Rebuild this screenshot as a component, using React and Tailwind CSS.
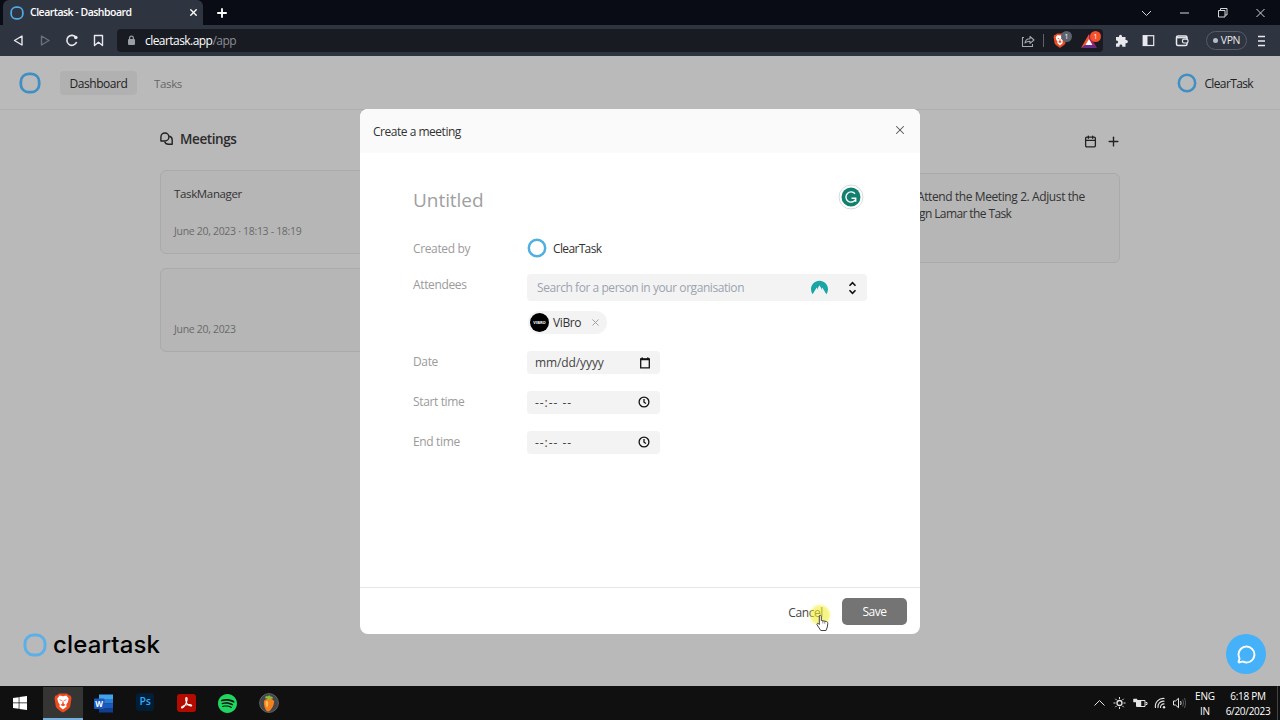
import React, { useState } from "react";
import { Calendar, MessageCircle, Plus, X } from "lucide-react";
import { SiNordvpn, SiSpotify } from "react-icons/si";

const meetings = [
  { id: 1, title: "TaskManager", when: "June 20, 2023 · 18:13 - 18:19" },
  { id: 2, title: "", when: "June 20, 2023" },
];

const Logo = ({ className }) => (
  <svg viewBox="0 0 24 24" className={className} fill="none">
    <rect x="2" y="2" width="20" height="20" rx="8.500" stroke="currentColor" strokeWidth="3" />
  </svg>
);

const Ring = ({ className }) => (
  <svg viewBox="0 0 20 20" className={className} fill="none">
    <circle cx="10" cy="10" r="8.200" stroke="currentColor" strokeWidth="2.500" />
  </svg>
);

const BraveIcon = ({ className }) => (
  <svg viewBox="0 0 18 20" className={className}>
    <path d="M5 .5h8L15 2.300l1.800.4.700 2.500-1.300 8.300c-.5 1.800-5.200 5-7.200 6-2-1-6.700-4.200-7.200-6L.5 5.200l.7-2.500L3 2.300z" fill="#ee4a22" />
    <path d="m9 3.200 3.300-.6 2.400 2.900-.8 3.500-1.700 2.800.5 1.600L9 16.500l-3.700-3.100.5-1.600L4.100 9l-.8-3.500 2.400-2.900z" fill="#fff" />
    <path d="m5 6.200 2.700.8-.2 1.300zM13 6.200l-2.700.8.2 1.300zM9 6.500l.8 4.200L11.500 12 9 13.200 6.500 12l1.700-1.300z" fill="#ee4a22" />
  </svg>
);

const TabBar = () => (
  <div className="flex h-[25px] shrink-0 items-stretch bg-[#090c15] text-white">
    <div className="ml-[3px] flex w-[200px] items-center rounded-t-md bg-[#2f3441] pl-[7px] pr-[4px]">
      <Logo className="h-[14px] w-[14px] text-[#4fa9e2]" />
      <span className="ml-[6px] flex-1 whitespace-nowrap text-[10.5px] font-semibold tracking-[-0.5px]">
        Cleartask - Dashboard
      </span>
      <X size={11} strokeWidth={3} />
    </div>
    <div className="flex w-[37px] items-center justify-center">
      <Plus size={14} strokeWidth={3.2} />
    </div>
    <div className="ml-auto flex items-center pr-[8px]">
      <svg width="134" height="14" viewBox="0 0 134 14" fill="none" stroke="#d5d6da">
        <path d="M4 5l4.500 4.500L13 5" />
        <path d="M42 7h9" />
        <path d="M80.500 4.500h6.500v6.500h-6.500zM82.500 4.500v-2h6.500v6.500h-2" />
        <path d="M118.500 3l8 8M126.500 3l-8 8" />
      </svg>
    </div>
  </div>
);

const Toolbar = () => (
  <div className="flex h-[31px] shrink-0 items-center bg-[#2f3441] text-[#e8e9ec]">
    <svg width="117" height="30" viewBox="0 0 117 30" fill="none" stroke="#e8e9ec" strokeWidth="1.400" strokeLinejoin="round">
      <path d="M22 10v9L14.500 14.500z" />
      <path d="M41.500 10v9L49 14.500z" stroke="#6b707c" />
      <path d="M76 11.500a5 5 0 1 0 .6 4.500" strokeWidth="1.600" />
      <circle cx="75.800" cy="11.500" r="1.800" fill="#e8e9ec" stroke="none" />
      <path d="M94.500 9.500h8v10l-4-3.300-4 3.300z" />
    </svg>
    <div className="flex h-[23px] w-[986px] items-center rounded bg-[#191b22] pl-[10px]">
      <svg width="9" height="11" viewBox="0 0 9 11" fill="none">
        <rect x="1" y="4" width="7" height="6" rx="1" fill="#9a9da4" />
        <path d="M2.600 4.500V3a1.900 1.900 0 0 1 3.800 0v1.500" stroke="#9a9da4" strokeWidth="1.200" />
      </svg>
      <span className="ml-[9px] flex-1 whitespace-nowrap text-[12px] tracking-[-0.55px] text-white">
        cleartask.app<span className="text-[#8a8d95]">/app</span>
      </span>
      <svg width="14" height="14" viewBox="0 0 14 14" fill="none" stroke="#a5a8ae" strokeWidth="1.100">
        <path d="M3 3.500H1.500v9h10V10" />
        <path d="M4 9c.3-2.800 2-4.200 5-4.200V2.500L13 6 9 9.300V7.200C6.800 7.200 5.200 7.700 4 9Z" strokeLinejoin="round" />
      </svg>
      <div className="ml-[8px] mr-[9px] h-[13px] w-px bg-[#5f626a]" />
      <div className="relative h-[16px] w-[20px]">
        <BraveIcon className="h-[15px] w-[14px]" />
        <span className="absolute -top-[2px] left-[8px] h-[11px] w-[11px] rounded-full bg-[#5d626e] text-center text-[7px] leading-[11px] text-white">
          1
        </span>
      </div>
      <div className="relative ml-[8px] h-[16px] w-[22px]">
        <svg width="16" height="14" viewBox="0 0 16 14" className="mt-px">
          <path d="M8 0 0 14l8-5z" fill="#f2552b" />
          <path d="m8 0 8 14-8-5z" fill="#9e1f63" />
          <path d="M0 14h16L8 9z" fill="#662d91" />
          <path d="m8 5 3.500 6h-7z" fill="#fff" />
        </svg>
        <span className="absolute -top-[2px] left-[9px] h-[11px] w-[11px] rounded-full bg-[#f5502a] text-center text-[7px] leading-[11px] text-white">
          1
        </span>
      </div>
    </div>
    <svg width="94" height="30" viewBox="0 0 94 30" fill="none" stroke="#e8e9ec">
      <path
        d="M13 11h3v-.8a1.500 1.500 0 0 1 3 0v.8h3.500v3h.8a1.600 1.600 0 0 1 0 3.200h-.8v3.500h-3.200v-.8a1.400 1.400 0 0 0-2.800 0v.8H13v-3.200h.6a1.500 1.500 0 0 0 0-3H13z"
        fill="#e8e9ec"
        stroke="none"
      />
      <rect x="40.200" y="9.700" width="10.500" height="9.800" strokeWidth="1.200" />
      <path d="M40 9.500h4.500v10H40z" fill="#e8e9ec" stroke="none" />
      <rect x="73.500" y="10" width="10.500" height="9.500" rx="1.500" strokeWidth="1.500" />
      <path d="M74 11.700h10" strokeWidth="1.300" />
      <rect x="79.500" y="13.200" width="5.500" height="3.800" rx="1.500" fill="#2f3441" strokeWidth="1.200" />
    </svg>
    <div className="ml-[9px] flex h-[19px] w-[41px] items-center justify-center gap-[3px] rounded-full border border-[#565b67]">
      <span className="h-[5px] w-[5px] rounded-full bg-[#b9bcc4]" />
      <span className="text-[10.5px] tracking-[-0.4px]">VPN</span>
    </div>
    <svg width="9" height="12" viewBox="0 0 9 12" className="ml-[10px]" stroke="#e8e9ec" strokeWidth="1.300">
      <path d="M1 1.500h7M1 6h7M1 10.500h7" />
    </svg>
  </div>
);

const Header = () => (
  <header className="flex h-[54px] items-center border-b border-[#aeaeae] bg-[#bababa] pl-[19px] pr-[27px]">
    <Logo className="h-[22px] w-[22px] text-[#3f8fc4]" />
    <nav className="ml-[19px] flex items-center pt-px">
      <a className="flex h-[24px] w-[77px] items-center justify-center rounded bg-[#b1b1b1] pt-px text-[12px] font-medium tracking-[-0.45px] text-[#222]">
        Dashboard
      </a>
      <a className="ml-[17px] pt-px text-[11.5px] tracking-[-0.35px] text-[#666]">Tasks</a>
    </nav>
    <Ring className="ml-auto h-[20px] w-[20px] text-[#3f8fc4]" />
    <span className="ml-[7px] pt-[2px] text-[12px] tracking-[-0.62px] text-[#222]">ClearTask</span>
  </header>
);

const Meetings = () => (
  <section className="w-[310px]">
    <h2 className="mt-[19px] flex h-[20px] items-center text-[13.5px] font-semibold tracking-[-0.4px] text-[#2b2b2b]">
      <svg width="13" height="13" viewBox="0 0 13 13" fill="none" stroke="#222" strokeWidth="1.400" strokeLinejoin="round" className="mb-px mr-[7px]">
        <path d="M.9 9V4.900A4 4 0 1 1 4.900 9z" />
        <path d="M9.300 4.300c1.800.4 2.900 1.800 2.900 3.600v4.300H8.300c-1.700 0-3-.9-3.600-2.500" />
      </svg>
      Meetings
    </h2>
    <div className="mt-[21px] flex flex-col gap-[14px]">
      {meetings.map((meeting) => (
        <div
          key={meeting.id}
          className="flex h-[84px] flex-col justify-between rounded-md border border-[#aaa] bg-[#b6b6b6] px-[13px] pb-[14px] pt-[13px]"
        >
          <h3 className="text-[11.5px] leading-[19px] tracking-[-0.35px] text-[#333]">{meeting.title}</h3>
          <p className="text-[10.5px] leading-[16px] tracking-[-0.31px] text-[#6a6a6a]">{meeting.when}</p>
        </div>
      ))}
    </div>
  </section>
);

const Tasks = () => (
  <section className="w-[310px]">
    <div className="-mr-px mt-[21px] flex h-[20px] items-center justify-end gap-[9px] text-[#222]">
      <Calendar size={13} strokeWidth={2.4} />
      <Plus size={15} strokeWidth={2.2} />
    </div>
    <div className="mt-[22px] h-[90px] rounded-md border border-[#aaa] bg-[#b6b6b6] pl-[106px] pt-[14px] text-[12px] leading-[17.500px] tracking-[-0.4px] text-[#333]">
      <p className="whitespace-nowrap">Attend the Meeting 2. Adjust the</p>
      <p className="-mt-px whitespace-nowrap pl-[2px] tracking-[-0.6px]">gn Lamar the Task</p>
    </div>
  </section>
);

const Row = ({ label, className, children }) => (
  <div className={className}>
    <span className="flex h-[22px] w-[114px] shrink-0 items-center text-[12px] tracking-[-0.36px] text-[#9b9b9b]">
      {label}
    </span>
    {children}
  </div>
);

const Clock = () => (
  <svg width="12" height="12" viewBox="0 0 12 12" fill="none" stroke="#111" strokeWidth="1.300" className="mb-px">
    <circle cx="6" cy="6" r="4.900" />
    <path d="M6 3v3.200l2 1.300" />
  </svg>
);

const PickerField = ({ children }) => (
  <div className="flex h-[23px] w-[133px] items-center justify-between rounded bg-[#f3f3f3] pl-[8px] pr-[10px] text-[12px] text-[#444]">
    {children}
  </div>
);

const TimeField = () => (
  <PickerField>
    <span className="pt-px tracking-[0.95px]">--:-- --</span>
    <Clock />
  </PickerField>
);

const MeetingModal = ({ onClose }) => (
  <div className="flex h-[525px] w-[560px] flex-col overflow-hidden rounded-lg bg-white">
    <div className="flex h-[44px] items-center justify-between bg-[#fafafa] px-[13px]">
      <span className="pt-px text-[12px] tracking-[-0.48px] text-[#333]">Create a meeting</span>
      <button onClick={onClose} className="mb-[2px]">
        <X size={14} strokeWidth={1.8} className="text-[#555]" />
      </button>
    </div>

    <div className="flex-1 px-[53px] pt-[27px]">
      <div className="flex h-[40px] items-center justify-between">
        <span className="text-[19px] tracking-[-0.05px] text-[#a0a0a0]">Untitled</span>
        <svg width="26" height="26" viewBox="0 0 26 26" fill="none" className="mb-[6px] mr-[3px]">
          <circle cx="13" cy="13" r="12" stroke="#d5dcdb" />
          <circle cx="13" cy="13" r="9.500" fill="#11806f" />
          <path d="M17 9.800A5.100 5.100 0 1 0 17.300 15.800M13.500 14.200h4.200v3.600" stroke="#fff" strokeWidth="1.400" />
        </svg>
      </div>

      <Row label="Created by" className="mt-[14px] flex h-[28px] items-center pt-px">
        <Ring className="mb-[2px] h-[20px] w-[20px] text-[#4fb0e0]" />
        <span className="ml-[6px] text-[12px] tracking-[-0.65px] text-[#333]">ClearTask</span>
      </Row>

      <Row label="Attendees" className="mt-[12px] flex">
        <div className="flex-1">
          <div className="flex h-[27px] items-center rounded bg-[#f3f3f3] pl-[10px] pr-[10px]">
            <span className="flex-1 text-[12px] tracking-[-0.44px] text-[#9ca3af]">
              Search for a person in your organisation
            </span>
            <SiNordvpn className="mr-[20px] h-[17px] w-[17px] text-[#17a5a5]" />
            <svg width="9" height="14" viewBox="0 0 9 14" fill="none" stroke="#111" strokeWidth="1.600">
              <path d="M1.500 4.700l3-3 3 3M1.500 9.300l3 3 3-3" />
            </svg>
          </div>
          <div className="ml-px mt-[10px] flex h-[23px] w-[79px] items-center rounded-full bg-[#f3f3f3] pl-[2px]">
            <span className="flex h-[19px] w-[19px] items-center justify-center rounded-full bg-black text-[4px] font-bold text-white">
              VIBRO
            </span>
            <span className="ml-[4px] pt-px text-[12px] tracking-[-0.4px] text-[#333]">ViBro</span>
            <X size={11} strokeWidth={2} className="ml-auto mr-[6px] text-[#999]" />
          </div>
        </div>
      </Row>

      <Row label="Date" className="mt-[17px] flex">
        <PickerField>
          <span className="pt-px tracking-[-0.1px]">mm/dd/yyyy</span>
          <svg width="10" height="12" viewBox="0 0 10 12" fill="none" stroke="#111">
            <path d="M.700 2v8.800h8.600V2z" strokeWidth="1.300" />
            <path d="M.5 2.500h9M2.200.5v2M7.800.5v2" strokeWidth="1.600" />
          </svg>
        </PickerField>
      </Row>
      <Row label="Start time" className="mt-[17px] flex">
        <TimeField />
      </Row>
      <Row label="End time" className="mt-[17px] flex">
        <TimeField />
      </Row>
    </div>

    <div className="flex h-[47px] items-center justify-end gap-[19px] border-t border-[#e6e6e6] pr-[13px]">
      <button onClick={onClose} className="pt-[3px] text-[12px] tracking-[-0.4px] text-[#444]">
        Cancel
      </button>
      <button className="h-[27px] w-[65px] rounded-[5px] bg-[#747474] pt-[2px] text-[12px] font-medium tracking-[-0.5px] text-white">
        Save
      </button>
    </div>
  </div>
);

const Cursor = () => (
  <div className="absolute left-[810px] top-[549px]">
    <div className="h-[20px] w-[20px] rounded-full bg-[#f2ee2c]/60 blur-[1px]" />
    <svg width="13" height="18" viewBox="0 0 13 18" className="absolute left-[6px] top-[9px]">
      <path
        d="M3.500 1.500c.9-.6 1.800 0 1.800 1v4l5 1c1 .2 1.600 1 1.500 2L11.300 13l-1.300 3.500H4.800L1 10.800c-.5-1 .6-1.900 1.500-1.200l.8.900V2z"
        fill="#fff"
        stroke="#444"
      />
      <path d="M6.800 7v2.500M8.800 7.300v2.500" stroke="#666" strokeWidth=".7" />
    </svg>
  </div>
);

const WordIcon = () => (
  <svg width="20" height="19" viewBox="0 0 20 19">
    <path d="M5 .5h14v4.700H5z" fill="#41a5ee" />
    <path d="M5 5h14v4.600H5z" fill="#2b7cd3" />
    <path d="M5 9.500h14V14H5z" fill="#185abd" />
    <path d="M5 14h14v4.500H5z" fill="#103f91" />
    <rect x="0" y="4.500" width="10.500" height="10.500" rx="1" fill="#185abd" />
    <text x="5.200" y="12.800" textAnchor="middle" fontSize="8" fontWeight="700" fill="#fff">
      W
    </text>
  </svg>
);

const AcrobatIcon = () => (
  <svg width="19" height="18" viewBox="0 0 19 18" fill="none">
    <rect width="19" height="18" rx="3" fill="#b30b00" />
    <path
      d="M9.300 3.500c1.300 0 .9 3-.1 5.300-1.100 2.500-3.100 5.300-4.300 5.100-1.300-.4.700-2.200 3.700-2.900 3.200-.8 6.200-.5 6.100.5-.1 1.200-3.100.3-4.600-1.800C8.700 7.900 8.300 3.500 9.300 3.500Z"
      stroke="#fff"
      strokeWidth="1.100"
    />
  </svg>
);

const FruityIcon = () => (
  <svg width="20" height="20" viewBox="0 0 20 20">
    <circle cx="10" cy="10" r="9.400" fill="#454648" stroke="#626262" />
    <path d="M5 8.200c.3-3.200 9-3.600 10 0 .5 3.800-3.500 10.300-6 10.300S4.600 12.500 5 8.200Z" fill="#f5801f" />
    <path d="M6.800 8.500c.8-1 2-.8 2.300.5.300 2-.3 5.500-1 5.500S6 10.500 6.800 8.500Z" fill="#fdc04a" />
    <path d="M6.200 5.200C6 3.500 7.500 2.500 8.700 3.500c.8-1.600 2.600-1.300 2.800.3 1.500-.8 2.800.4 2.200 1.900-1.300-.4-2 .9-3.200.9-1.300 0-2.600-1.600-4.300-1.400Z" fill="#86bf3d" />
  </svg>
);

const AppSlot = ({ children }) => (
  <div className="flex w-[41.4px] items-center justify-center">{children}</div>
);

const Taskbar = () => (
  <footer className="flex h-[34px] shrink-0 bg-[#101010] text-white">
    <div className="flex w-[43px] items-center pl-[13px]">
      <svg width="14" height="14" viewBox="0 0 14 14" fill="#fff">
        <path d="M0 2l5.700-.8v5.400H0zM6.400 1.100 14 0v6.600H6.400zM0 7.300h5.700v5.400L0 11.900zM6.400 7.300H14v6.700l-7.600-1.100z" />
      </svg>
    </div>
    <div className="mt-px flex w-[40px] items-center justify-center border-b-2 border-[#76b0dd] bg-[#353533]">
      <BraveIcon className="h-[20px] w-[18px]" />
    </div>
    <AppSlot>
      <WordIcon />
    </AppSlot>
    <AppSlot>
      <div className="mb-[2px] h-[18px] w-[18px] rounded-[3px] bg-[#001e36] text-center text-[10.5px] font-semibold leading-[17px] tracking-[-0.3px] text-[#31a8ff]">
        Ps
      </div>
    </AppSlot>
    <AppSlot>
      <AcrobatIcon />
    </AppSlot>
    <AppSlot>
      <SiSpotify className="h-[19px] w-[19px] text-[#1ed760]" />
    </AppSlot>
    <AppSlot>
      <FruityIcon />
    </AppSlot>

    <div className="ml-auto flex items-center">
      <svg width="96" height="16" viewBox="0 0 96 16" fill="none" stroke="#e4e4e4">
        <path d="M4.500 10.500l5-5 5 5" />
        <circle cx="29.500" cy="8" r="2.500" strokeWidth="1.300" />
        <path d="M29.500 2v2M29.500 12v2M23.500 8h2M33.500 8h2M25.300 3.800l1.400 1.400M32.300 10.800l1.400 1.400M33.700 3.800l-1.400 1.400M26.700 10.800l-1.400 1.400" />
        <path d="M46.500 5.500h8.500v6h-8.500zM55.500 7.500h1.500v2h-1.500" />
        <path d="M47 6h4v5h-4zM43.500 4h3.500v3h-3.500z" fill="#e4e4e4" strokeWidth=".5" />
        <path d="M65.500 13A8 8 0 0 1 74.500 3.500M68 13a5.600 5.600 0 0 1 6.500-6.800M70.500 13a3.400 3.400 0 0 1 4-4" strokeWidth="1.100" />
        <circle cx="74" cy="12.200" r="1.200" fill="#e4e4e4" stroke="none" />
        <path d="M83.500 6h2l3-2.700v9.400l-3-2.700h-2z" />
        <path d="M90.500 6c.7 1.200.7 2.800 0 4" />
        <path d="M92.500 4.500c1.300 2 1.300 5 0 7M94.500 3c1.300 3 1.300 7 0 10" stroke="#6a6a6a" strokeWidth=".8" />
      </svg>
      <div className="ml-[5px] w-[28px] pt-px text-center text-[10px] leading-[15px] tracking-[-0.2px]">
        <p>ENG</p>
        <p>IN</p>
      </div>
      <div className="ml-[4px] w-[50px] whitespace-nowrap pt-px text-center text-[10px] leading-[15px] tracking-[-0.3px]">
        <p>6:18 PM</p>
        <p>6/20/2023</p>
      </div>
      <div className="ml-[4px] mr-[2px] h-full w-px bg-[#444]" />
    </div>
  </footer>
);

const App = () => {
  const [isModalOpen, setIsModalOpen] = useState(true);

  return (
    <div className="flex h-[720px] w-[1280px] flex-col overflow-hidden font-['Open_Sans','Noto_Sans',sans-serif]">
      <TabBar />
      <Toolbar />

      <main className="relative flex-1 bg-[#b9b9b9]">
        <Header />
        <div className="mx-auto flex w-[960px] justify-between">
          <Meetings />
          <Tasks />
        </div>

        {/* Brand mark and chat launcher float over the page */}
        <div className="absolute bottom-[27px] left-[23px] flex items-center text-black">
          <Logo className="h-[24px] w-[24px] text-[#5cb0e8]" />
          <span className="ml-[6px] font-['Inter',sans-serif] text-[24px] font-medium leading-[28px] tracking-[0.15px]">
            cleartask
          </span>
        </div>
        <button className="absolute bottom-[12px] right-[14px] flex h-[40px] w-[40px] items-center justify-center rounded-full bg-[#45b1f8] text-white">
          <MessageCircle size={19} strokeWidth={2.4} />
        </button>

        {isModalOpen && (
          <div className="absolute inset-0 flex items-center justify-center pt-px">
            <MeetingModal onClose={() => setIsModalOpen(false)} />
          </div>
        )}
        <Cursor />
      </main>

      <Taskbar />
    </div>
  );
};

export default App;
